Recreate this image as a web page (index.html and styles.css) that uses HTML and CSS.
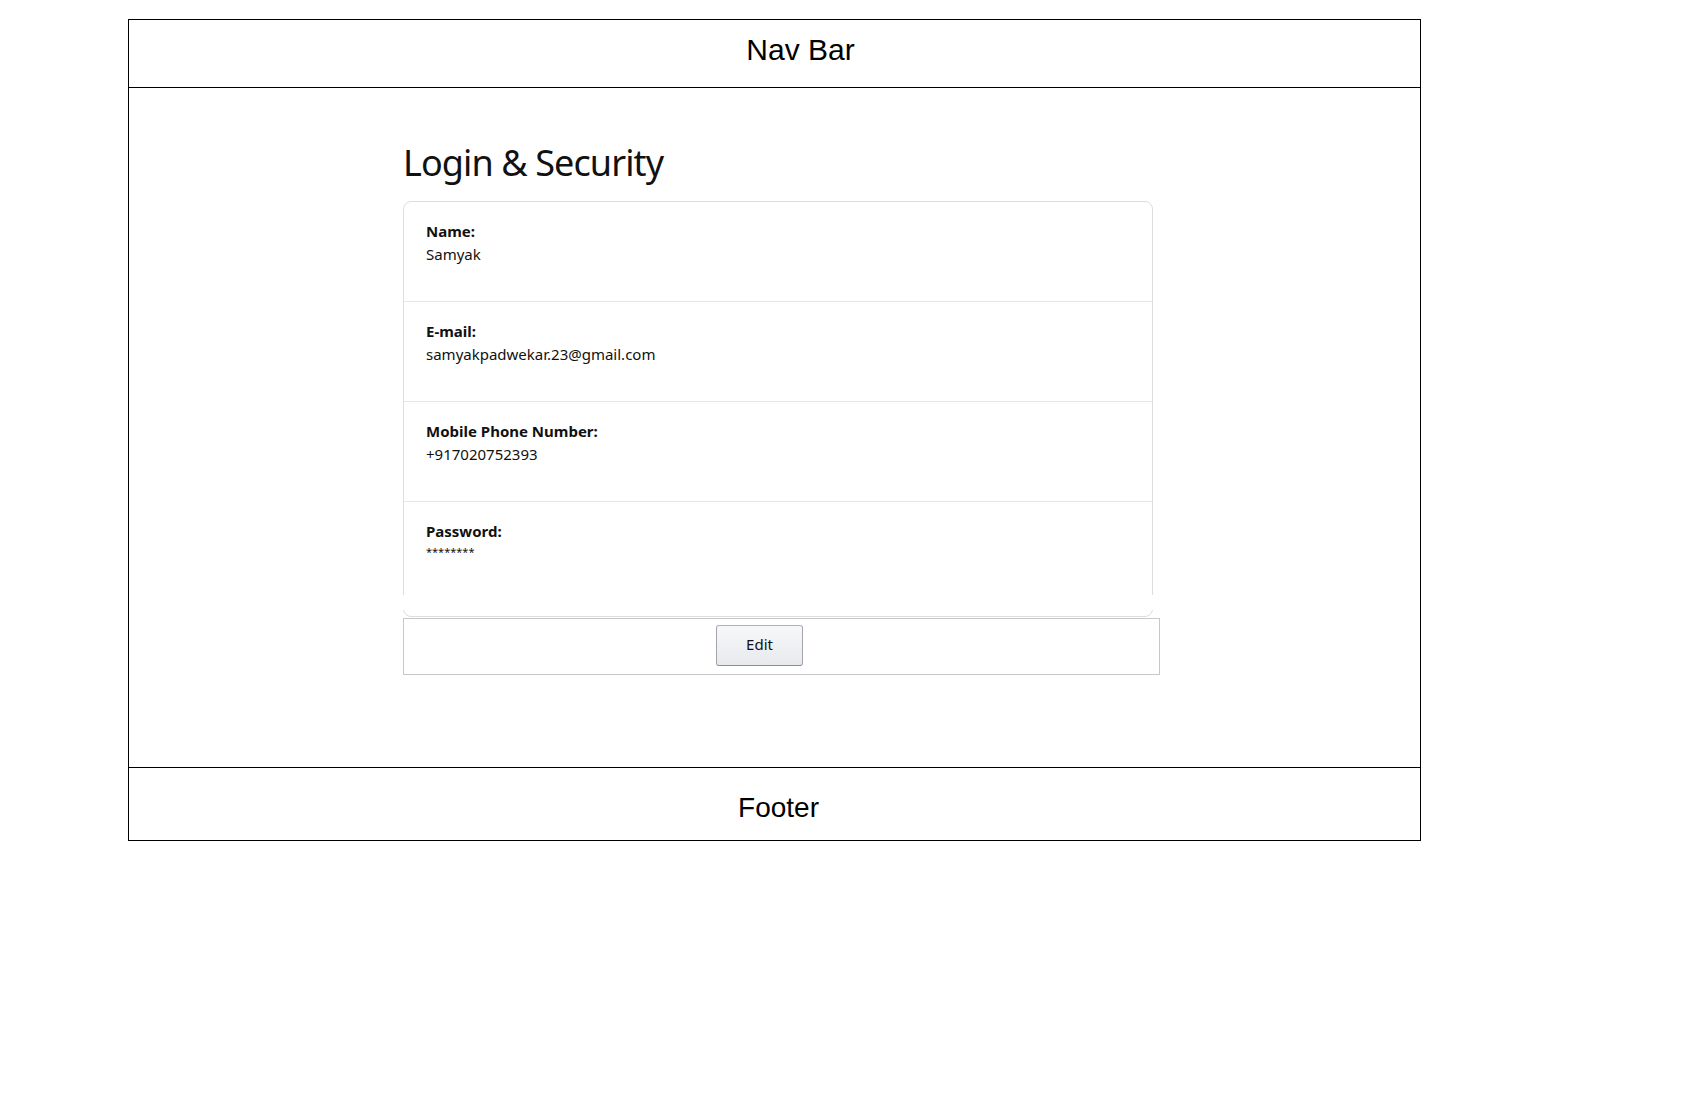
FILE: index.html
```html
<!DOCTYPE html>
<html lang="en">
<head>
<meta charset="utf-8">
<title>Login &amp; Security</title>
<link rel="stylesheet" href="styles.css">
</head>
<body>
<div class="frame">
  <header class="navbar">Nav Bar</header>
  <main class="main">
    <div class="content">
      <h1 class="title">Login &amp; Security</h1>
      <div class="card">
        <div class="row">
          <div class="label">Name:</div>
          <div class="value">Samyak</div>
        </div>
        <div class="row">
          <div class="label">E-mail:</div>
          <div class="value">samyakpadwekar.23@gmail.com</div>
        </div>
        <div class="row">
          <div class="label">Mobile Phone Number:</div>
          <div class="value">+917020752393</div>
        </div>
        <div class="row row-last">
          <div class="label">Password:</div>
          <div class="value"><span class="stars">********</span></div>
        </div>
      </div>
      <div class="edit-box">
        <button class="edit-btn" type="button">Edit</button>
      </div>
    </div>
  </main>
  <footer class="footer">Footer</footer>
</div>
</body>
</html>
```

FILE: styles.css
```css
* {
  box-sizing: border-box;
}

html, body {
  margin: 0;
  padding: 0;
  background: #fff;
}

body {
  font-family: "Noto Sans", "Open Sans", sans-serif;
  color: #111;
}

.frame {
  margin: 19px 0 0 128px;
  width: 1293px;
}

.navbar {
  height: 69px;
  border: 1px solid #000;
  padding: 13px 0 0 52px;
  text-align: center;
  font-family: "Liberation Sans", Arial, sans-serif;
  font-size: 30px;
  line-height: 34px;
  color: #000;
}

.main {
  height: 679px;
  border-left: 1px solid #000;
  border-right: 1px solid #000;
  padding: 53px 0 0 274px;
}

.content {
  width: 757px;
}

.title {
  margin: 0 0 17px 0;
  font-size: 36px;
  line-height: 43px;
  font-weight: 400;
  letter-spacing: -0.9px;
  color: #111;
}

.card {
  position: relative;
  width: 750px;
  border: 1px solid #ddd;
  border-radius: 8px;
  background: #fff;
}

.card::after {
  content: "";
  position: absolute;
  left: -1px;
  right: -1px;
  bottom: 6px;
  height: 15px;
  background: #fff;
}

.row {
  height: 100px;
  padding: 18px 22px 0 22px;
  border-bottom: 1px solid #e7e7e7;
}

.row-last {
  height: 114px;
  border-bottom: none;
}

.label {
  font-size: 15px;
  line-height: 23px;
  font-weight: 700;
}

.value {
  font-size: 15px;
  line-height: 23px;
  font-weight: 400;
}

.stars {
  font-size: 11px;
  line-height: 11px;
  vertical-align: 4px;
}

.edit-box {
  margin-top: 1px;
  height: 57px;
  border: 1px solid #c8c8c8;
  padding: 6px 0 0 312px;
  display: flex;
  align-items: flex-start;
}

.edit-btn {
  width: 87px;
  height: 41px;
  border: 1px solid #adb1b8;
  border-color: #adb1b8 #a2a6ac #8d9096;
  border-radius: 3px;
  background: linear-gradient(to bottom, #f7f8fa, #e7e9ec);
  font-family: "Noto Sans", "Open Sans", sans-serif;
  font-size: 15px;
  line-height: 20px;
  color: #111;
  padding: 0 0 4px 0;
  cursor: pointer;
}

.footer {
  height: 74px;
  border: 1px solid #000;
  padding: 24px 0 0 8px;
  text-align: center;
  font-family: "Liberation Sans", Arial, sans-serif;
  font-size: 28px;
  line-height: 32px;
  color: #000;
}
```
